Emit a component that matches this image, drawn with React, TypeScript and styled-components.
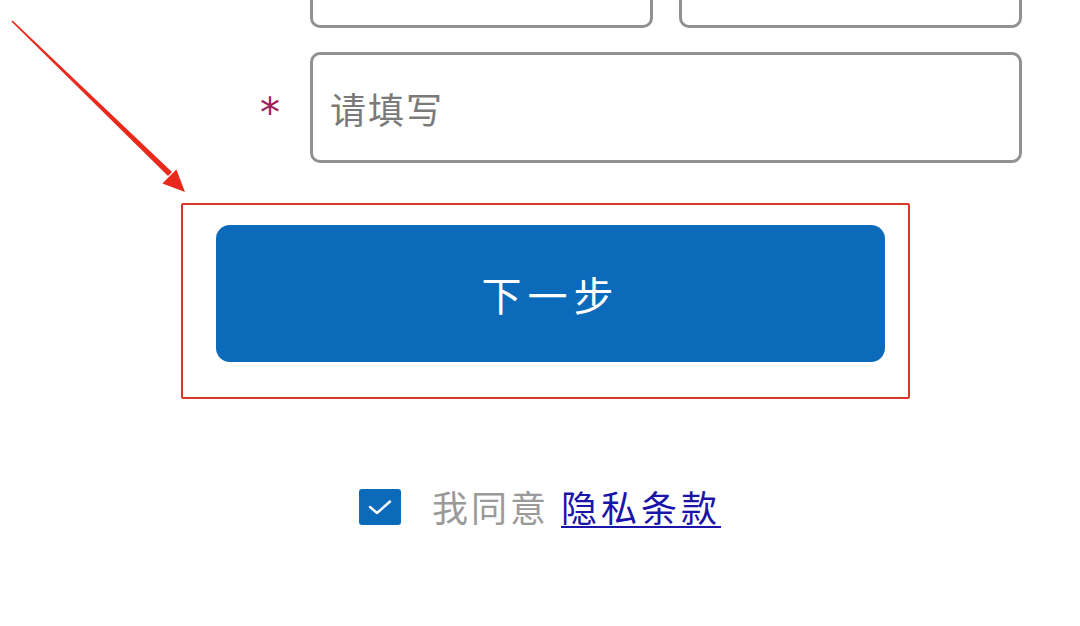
import React from "react";
import styled, { createGlobalStyle } from "styled-components";

const GlobalStyle = createGlobalStyle`
  html, body {
    margin: 0;
    padding: 0;
    background: #ffffff;
    overflow: hidden;
  }
  body {
    font-family: "Noto Sans CJK SC", "Noto Sans", sans-serif;
  }
`;

const Page = styled.div`
  position: relative;
  width: 1080px;
  height: 626px;
  overflow: hidden;
`;

const Form = styled.div`
  display: flex;
  flex-direction: column;
  gap: 24px;
  margin-top: -83px;
`;

const Row = styled.div`
  display: flex;
  align-items: center;
  gap: 30px;
`;

const Label = styled.div`
  width: 280px;
  text-align: right;
  font-size: 40px;
  line-height: 1;
  color: #9e1f5c;
  font-family: "DejaVu Sans", sans-serif;
  padding-top: 10px;
`;

const Fields = styled.div`
  display: flex;
  gap: 26px;
  width: 712px;
`;

const Input = styled.input`
  flex: 1;
  min-width: 0;
  height: 111px;
  box-sizing: border-box;
  border: 3px solid #919191;
  border-radius: 10px;
  padding: 0 17px;
  font-size: 36px;
  font-family: "Noto Sans CJK SC", sans-serif;
  color: #333;
  outline: none;
  background: #fff;

  &::placeholder {
    color: #7a7a7a;
    letter-spacing: 2px;
  }
`;

const Highlight = styled.div`
  margin: 40px 0 0 181px;
  width: 729px;
  box-sizing: border-box;
  border: 2px solid #d6382b;
  border-radius: 2px;
  padding: 20px 23px 35px 33px;
`;

const NextButton = styled.button`
  display: flex;
  align-items: center;
  justify-content: center;
  width: 100%;
  height: 137px;
  padding-top: 2px;
  border: none;
  border-radius: 14px;
  background: #0b6aba;
  color: #ffffff;
  font-size: 40px;
  letter-spacing: 6px;
  font-family: "Noto Sans CJK SC", sans-serif;
  cursor: pointer;
`;

const Agree = styled.label`
  display: flex;
  align-items: center;
  justify-content: center;
  gap: 31px;
  margin-top: 86px;
  font-size: 36px;
  line-height: 1.2;
`;

const Check = styled.span`
  display: inline-flex;
  align-items: center;
  justify-content: center;
  width: 42px;
  height: 36px;
  border-radius: 3px;
  background: #0b6aba;
`;

const AgreeText = styled.span`
  display: flex;
  align-items: baseline;
  gap: 12px;
  color: #9a9a9a;
  letter-spacing: 3px;
`;

const PolicyLink = styled.a`
  color: #1a14a8;
  text-decoration: underline;
  text-decoration-thickness: 2px;
  text-underline-offset: 4px;
  letter-spacing: 4px;
`;

const Arrow = styled.svg`
  position: absolute;
  left: 0;
  top: 0;
  pointer-events: none;
`;

export default function App() {
  return (
    <Page>
      <GlobalStyle />
      <Form>
        <Row>
          <Label />
          <Fields>
            <Input />
            <Input />
          </Fields>
        </Row>
        <Row>
          <Label>*</Label>
          <Fields>
            <Input placeholder="请填写" />
          </Fields>
        </Row>
      </Form>

      <Highlight>
        <NextButton>下一步</NextButton>
      </Highlight>

      <Agree>
        <Check>
          <svg width="26" height="18" viewBox="0 0 26 18">
            <path
              d="M3 9 L10 15 L23 3.5"
              fill="none"
              stroke="#ffffff"
              strokeWidth="2.4"
              strokeLinecap="round"
              strokeLinejoin="round"
            />
          </svg>
        </Check>
        <AgreeText>
          我同意
          <PolicyLink href="#">隐私条款</PolicyLink>
        </AgreeText>
      </Agree>

      <Arrow width="220" height="210" viewBox="0 0 220 210">
        <polygon points="11.4,21.6 12.6,20.4 172,172 168,176" fill="#e8291c" />
        <polygon points="185,192 162.4,183.6 176.4,169.4" fill="#e8291c" />
      </Arrow>
    </Page>
  );
}
